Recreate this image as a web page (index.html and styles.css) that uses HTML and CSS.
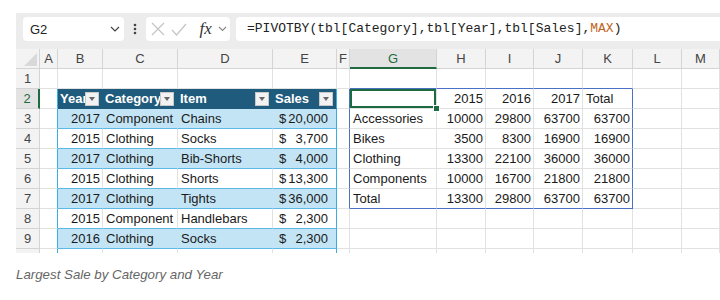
FILE: index.html
```html
<!DOCTYPE html>
<html lang="en">

<head>
    <meta charset="UTF-8">
    <title>PIVOTBY - Largest Sale</title>
    <link rel="stylesheet" href="styles.css">
</head>

<body>

    <div class="app">
        <div class="toolbar">
            <div class="namebox">
                <span>G2</span>
                <svg width="10" height="6" viewBox="0 0 10 6"><path d="M1 1l4 4 4-4" fill="none" stroke="#444" stroke-width="1.2"/></svg>
            </div>
            <div class="dots">
                <svg width="4" height="12" viewBox="0 0 4 12"><circle cx="2" cy="2" r="1.3" fill="#444"/><circle cx="2" cy="6" r="1.3" fill="#444"/><circle cx="2" cy="10" r="1.3" fill="#444"/></svg>
            </div>
            <div class="fxbox">
                <svg width="14" height="14" viewBox="0 0 14 14"><path d="M1 1l12 12M13 1L1 13" stroke="#c4c4c4" stroke-width="1.2"/></svg>
                <svg width="16" height="13" viewBox="0 0 16 13"><path d="M1 7l4.5 5L15 1" fill="none" stroke="#c4c4c4" stroke-width="1.2"/></svg>
                <span class="fx">fx</span>
                <svg width="9" height="6" viewBox="0 0 9 6"><path d="M1 1l3.5 3.5L8 1" fill="none" stroke="#888" stroke-width="1.1"/></svg>
            </div>
            <div class="formula">=PIVOTBY(tbl[Category],tbl[Year],tbl[Sales],<span class="fn">MAX</span>)</div>
        </div>

        <div class="sheet" id="sheet"></div>
    </div>

    <p class="caption">Largest Sale by Category and Year</p>

    <script>
        const letters = ["A", "B", "C", "D", "E", "F", "G", "H", "I", "J", "K", "L", "M"];

        // source table B2:E9 (tbl)
        const table = {
            2: ["Year", "Category", "Item", "Sales"],
            3: ["2017", "Component", "Chains", "20,000"],
            4: ["2015", "Clothing", "Socks", "3,700"],
            5: ["2017", "Clothing", "Bib-Shorts", "4,000"],
            6: ["2015", "Clothing", "Shorts", "13,300"],
            7: ["2017", "Clothing", "Tights", "36,000"],
            8: ["2015", "Component", "Handlebars", "2,300"],
            9: ["2016", "Clothing", "Socks", "2,300"]
        };

        // spilled PIVOTBY result G2:K7
        const pivot = {
            2: ["", "2015", "2016", "2017", "Total"],
            3: ["Accessories", "10000", "29800", "63700", "63700"],
            4: ["Bikes", "3500", "8300", "16900", "16900"],
            5: ["Clothing", "13300", "22100", "36000", "36000"],
            6: ["Components", "10000", "16700", "21800", "21800"],
            7: ["Total", "13300", "29800", "63700", "63700"]
        };

        const sheet = document.getElementById("sheet");

        function makeRow() {
            const row = document.createElement("div");
            row.className = "row";
            sheet.appendChild(row);
            return row;
        }

        function makeCell(row, cls, text) {
            const cell = document.createElement("div");
            cell.className = "cell " + cls;
            if (text !== undefined) cell.textContent = text;
            row.appendChild(cell);
            return cell;
        }

        // column header row
        const head = makeRow();
        makeCell(head, "corner");
        letters.forEach(l => makeCell(head, "colhead" + (l === "G" ? " sel" : ""), l));

        // rows 1-9, plus the top sliver of row 10
        for (let r = 1; r <= 10; r++) {
            const row = makeRow();
            makeCell(row, "rowhead" + (r === 2 ? " sel" : ""), r < 10 ? r : "");

            for (let c = 0; c < letters.length; c++) {
                const classes = [];
                let cell;
                const inTable = r >= 2 && c >= 1 && c <= 4;
                const inPivot = r >= 2 && r <= 7 && c >= 6 && c <= 10;

                if (inTable) {
                    classes.push(r === 2 ? "th" : (r % 2 ? "tb" : "tw"));
                    if (c === 4) classes.push("t-right");
                }
                if (r >= 2 && c === 0) classes.push("t-left");
                if (r === 1 && c >= 6 && c <= 10) classes.push("p-top");
                if (r >= 2 && r <= 7 && c === 5) classes.push("p-left");
                if (inPivot && c === 10) classes.push("p-right");
                if (r === 7 && c >= 6 && c <= 10) classes.push("p-bottom");

                cell = makeCell(row, classes.join(" "));

                if (inTable && table[r]) {
                    const val = table[r][c - 1];
                    if (r === 2) {
                        cell.innerHTML = `<span class="hd">${val}</span><span class="drop"></span>`;
                    } else if (c === 1) {
                        cell.textContent = val;
                        cell.classList.add("num");
                    } else if (c === 4) {
                        cell.innerHTML = `<span>$</span><span>${val}</span>`;
                        cell.classList.add("money");
                    } else {
                        cell.textContent = val;
                    }
                }

                if (inPivot) {
                    const val = pivot[r][c - 6];
                    cell.textContent = val;
                    if (c > 6 && val !== "Total") cell.classList.add("num");
                    if (r === 2 && c === 6) cell.classList.add("active");
                }
            }
        }
    </script>
</body>

</html>
```

FILE: styles.css
```css
/* Page */
body {
    margin: 0;
    font-family: "Liberation Sans", Arial, sans-serif;
    background: #ffffff;
    color: #1a1a1a;
}

.app {
    margin: 13px 0 0 16px;
}

/* Formula bar */
.toolbar {
    height: 36px;
    box-sizing: border-box;
    background: #ececec;
    padding: 4px 0 0 7px;
    display: flex;
    align-items: flex-start;
}

.namebox {
    width: 101px;
    height: 24px;
    box-sizing: border-box;
    background: #ffffff;
    border-radius: 4px;
    padding: 0 4px 0 7px;
    display: flex;
    align-items: center;
    justify-content: space-between;
    font-size: 13px;
    color: #222;
}

.dots {
    width: 22px;
    height: 24px;
    display: flex;
    align-items: center;
    justify-content: center;
}

.fxbox {
    width: 84px;
    height: 24px;
    box-sizing: border-box;
    background: #ffffff;
    border-radius: 4px;
    padding: 0 3px 0 5px;
    display: flex;
    align-items: center;
    justify-content: space-between;
}

.fx {
    font-family: "Liberation Serif", serif;
    font-style: italic;
    font-size: 17px;
    color: #333;
    margin-left: 6px;
}

.formula {
    flex: 1;
    height: 24px;
    margin-left: 6px;
    background: #ffffff;
    border-radius: 4px 0 0 4px;
    padding-left: 11px;
    font-family: "Liberation Mono", monospace;
    font-size: 13px;
    line-height: 24px;
    color: #222;
    white-space: nowrap;
}

.fn {
    color: #c0651b;
}

/* Grid */
.sheet {
    height: 204px;
    overflow: hidden;
    font-size: 13px;
}

.row {
    display: grid;
    grid-template-columns: 24px 18px 45px 75px 95px 64px 13px 87px 49px 48px 49px 50px 49px 1fr;
}

.cell {
    height: 20px;
    box-sizing: border-box;
    border-right: 1px solid #e1e1e1;
    border-bottom: 1px solid #e1e1e1;
    padding: 0 2px 0 3px;
    line-height: 19px;
    white-space: nowrap;
    overflow: hidden;
    position: relative;
}

.num {
    text-align: right;
}

.corner {
    background: #f3f3f3;
    border-color: #d4d4d4;
}

.corner::after {
    content: "";
    position: absolute;
    right: 2px;
    bottom: 2px;
    border-style: solid;
    border-width: 0 0 13px 13px;
    border-color: transparent transparent #d9d9d9 transparent;
}

.colhead {
    background: #f3f3f3;
    border-color: #d4d4d4;
    text-align: center;
    color: #444;
    padding: 0;
}

.rowhead {
    background: #f3f3f3;
    border-color: #d4d4d4;
    text-align: center;
    color: #444;
    padding: 0;
}

.colhead.sel {
    background: #e3e3e3;
    color: #1e6b41;
    border-bottom: 2px solid #1e6b41;
}

.rowhead.sel {
    background: #e3e3e3;
    color: #1e6b41;
    border-right: 2px solid #1e6b41;
}

/* Source table */
.th {
    background: #1f5b7c;
    border-right-color: #1f5b7c;
    border-bottom-color: #1f5b7c;
    color: #ffffff;
    font-weight: bold;
    padding: 0 3px 0 2px;
    display: flex;
    align-items: center;
}

.th .hd {
    flex: 1;
    overflow: hidden;
}

.drop {
    width: 14px;
    height: 14px;
    flex: none;
    box-sizing: border-box;
    background: #f2f2f2;
    border: 1px solid #c8c8c8;
    position: relative;
}

.drop::after {
    content: "";
    position: absolute;
    left: 3px;
    top: 4px;
    border-style: solid;
    border-width: 4px 3.5px 0 3.5px;
    border-color: #666 transparent transparent transparent;
}

.tb {
    background: #c2e4f5;
    border-right-color: #c2e4f5;
    border-bottom-color: #5cb8e4;
}

.tw {
    background: #ffffff;
    border-bottom-color: #5cb8e4;
}

.t-left {
    border-right-color: #3aaee2;
}

.t-right {
    border-right-color: #3aaee2;
}

.money {
    display: flex;
    justify-content: space-between;
    padding: 0 8px 0 6px;
}

/* PIVOTBY spill range */
.p-top {
    border-bottom-color: #4a72c4;
}

.p-left {
    border-right-color: #4a72c4;
}

.p-right {
    border-right-color: #4a72c4;
}

.p-bottom {
    border-bottom-color: #4a72c4;
}

.active {
    overflow: visible;
    box-shadow: inset 0 0 0 2px #1e6b41;
}

.active::after {
    content: "";
    position: absolute;
    right: -4px;
    bottom: -4px;
    width: 5px;
    height: 5px;
    background: #1e6b41;
    border: 1px solid #ffffff;
    z-index: 2;
}

/* Caption */
.caption {
    margin: 14px 0 0 16px;
    font-style: italic;
    font-size: 13.3px;
    color: #666;
}
```
